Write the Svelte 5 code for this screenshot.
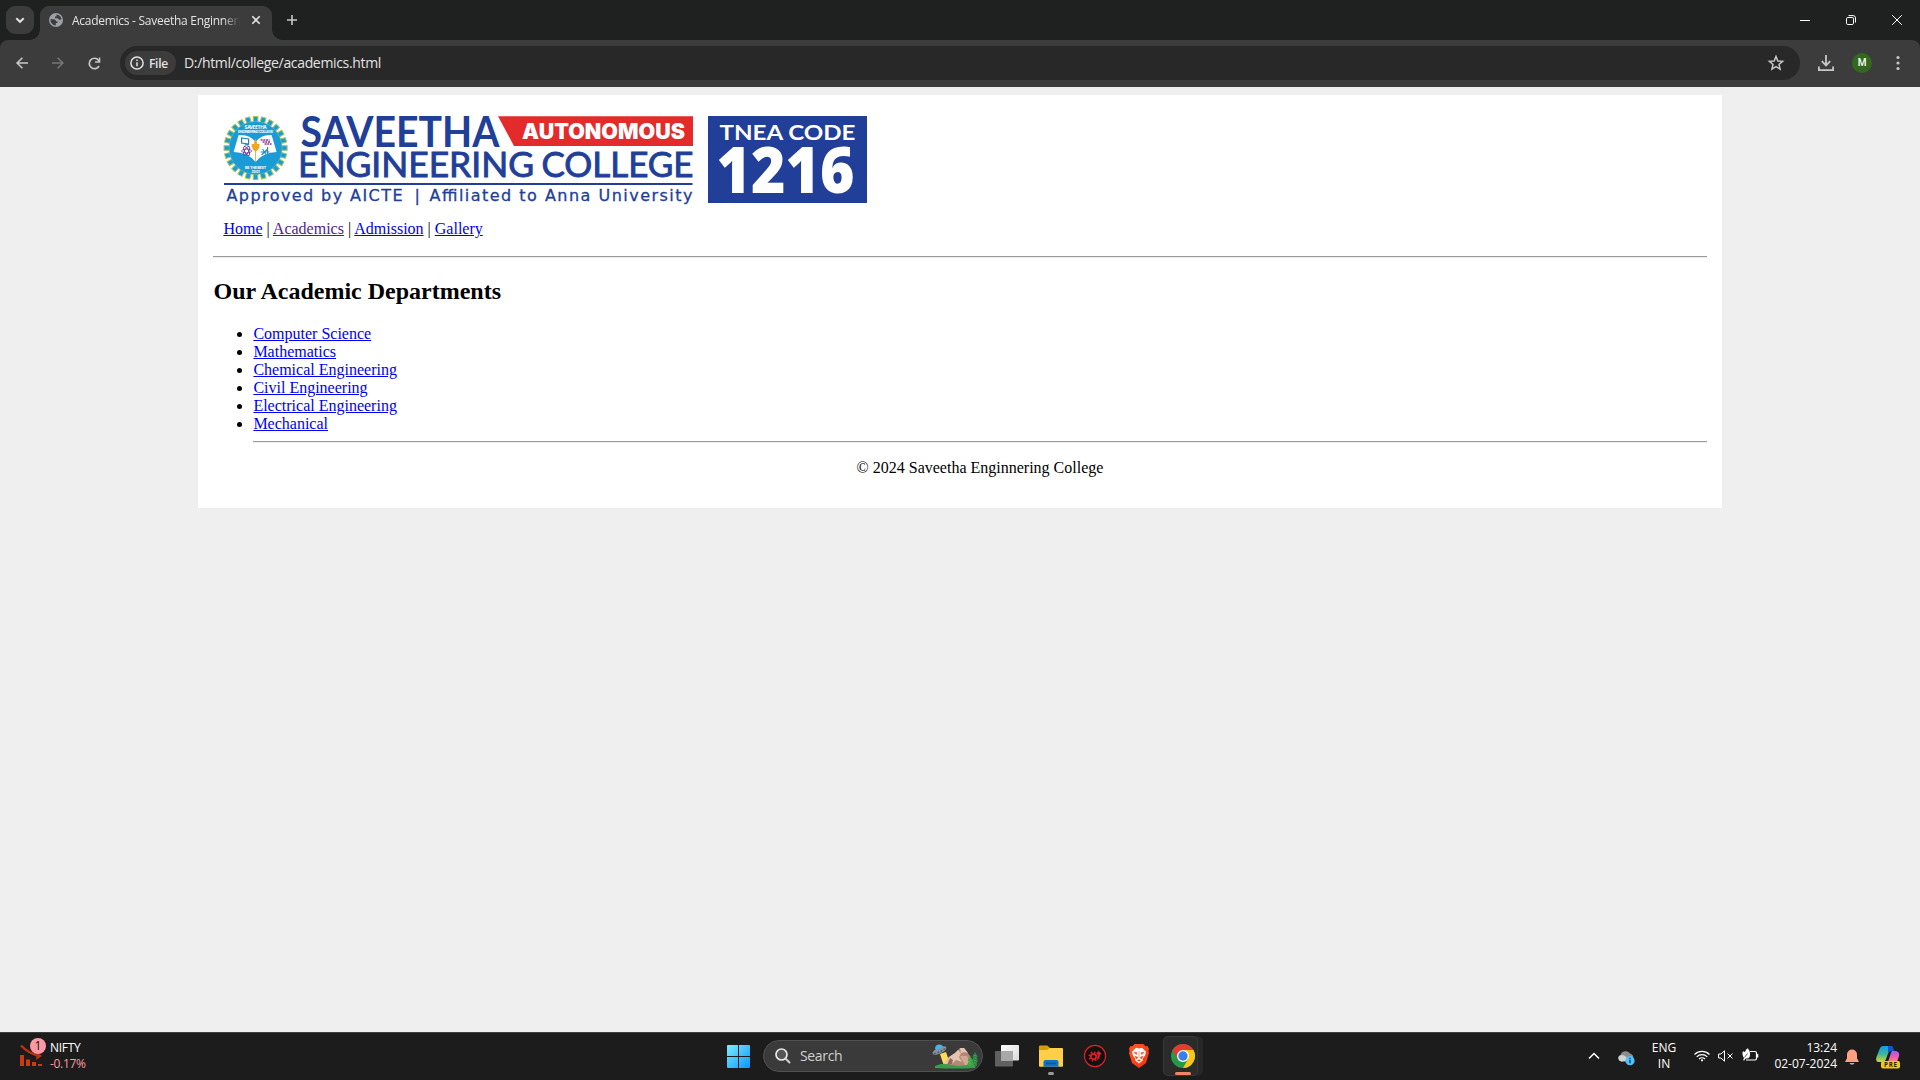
<script>
  const departments = [
    'Computer Science',
    'Mathematics',
    'Chemical Engineering',
    'Civil Engineering',
    'Electrical Engineering',
    'Mechanical'
  ];
  const teeth = Array.from({ length: 24 }, (_, i) => i * 15);
</script>

<div class="screen">
  <header class="tabstrip">
    <button class="tabsearch" aria-label="Search tabs">
      <svg width="28" height="28" viewBox="0 0 28 28"><path d="M10.3 12.2l3.7 3.6 3.7-3.6" fill="none" stroke="#e3e3e3" stroke-width="1.9" /></svg>
    </button>
    <div class="tab">
      <svg class="globe" width="14" height="14" viewBox="0 0 14 14">
        <circle cx="7" cy="7" r="7" fill="#9aa0a6" />
        <path d="M1.500 6.200h3.200c1.600 0 2.300 1 2.300 2.300h1.500v1.600H6.800v2.300C3.700 12.300 1.200 9.600 1.500 6.200zM7.500 1.500c2.500.2 4.500 2 5 4.600-.8 1-2 .9-2.800.2-.5-.5-.6-1-1.600-1H6V3.500h1.500z" fill="#3c3c3c" />
      </svg>
      <span class="title">Academics - Saveetha Enginnering College</span>
      <svg class="close" width="10" height="10" viewBox="0 0 10 10"><path d="M1.300 1.300l7.400 7.400M8.700 1.300L1.300 8.700" stroke="#e3e3e3" stroke-width="1.600" /></svg>
    </div>
    <svg class="plus" width="12" height="12" viewBox="0 0 12 12"><path d="M6 1v10M1 6h10" stroke="#c7c7c7" stroke-width="1.600" /></svg>
    <div class="controls">
      <svg width="10" height="10" viewBox="0 0 10 10"><path d="M0 5.500h10" stroke="#fff" /></svg>
      <svg width="10" height="10" viewBox="0 0 10 10" fill="none" stroke="#fff"><rect x=".5" y="2.500" width="7" height="7" rx="1.300" /><path d="M2.500.6h4.600a2.400 2.400 0 0 1 2.400 2.400v4.500" /></svg>
      <svg width="10" height="10" viewBox="0 0 10 10"><path d="M.2.2l9.600 9.600M9.800.2L.2 9.800" stroke="#fff" /></svg>
    </div>
  </header>

  <div class="toolbarwrap">
    <div class="toolbar">
      <svg class="nav" width="12" height="12" viewBox="0 0 12 12" fill="none" stroke="#c7c7c7" stroke-width="1.600"><path d="M12 6H1.200M6.400.7L1.100 6l5.300 5.300" /></svg>
      <svg class="nav fwd" width="12" height="12" viewBox="0 0 12 12" fill="none" stroke="#757575" stroke-width="1.600"><path d="M0 6h10.800M5.600.7L10.900 6l-5.300 5.300" /></svg>
      <svg class="nav reload" width="13" height="13" viewBox="0 0 13 13"><path d="M11 9A5.200 5.200 0 1 1 10.500 3.200L11.600 4.500" fill="none" stroke="#c7c7c7" stroke-width="1.700" /><path d="M12.300.5v5.200H7.100V4.200h3.700V.5z" fill="#c7c7c7" /></svg>
      <div class="omnibox">
        <span class="chip">
          <svg width="14" height="14" viewBox="0 0 14 14"><circle cx="7" cy="7" r="6.100" fill="none" stroke="#e3e3e3" stroke-width="1.500" /><path d="M7 6.200v4M7 3.500v1.500" stroke="#e3e3e3" stroke-width="1.500" /></svg>
          <b>File</b>
        </span>
        <span class="url">D:/html/college/academics.html</span>
        <svg class="star" width="16" height="16" viewBox="0 0 16 16"><path d="M8 1.500l1.850 4.450 4.750.4-3.600 3.100 1.100 4.700L8 11.650l-4.100 2.500L5 9.450l-3.600-3.100 4.750-.4z" fill="none" stroke="#c7c7c7" stroke-width="1.500" /></svg>
      </div>
      <svg class="download" width="16" height="16" viewBox="0 0 16 16" fill="none" stroke="#c7c7c7" stroke-width="1.800"><path d="M8 0v10M3.800 6.200L8 10.400l4.200-4.200M.9 11.500v3.600h14.200v-3.600" /></svg>
      <span class="avatar">M</span>
      <svg class="dots" width="4" height="16" viewBox="0 0 4 16" fill="#c7c7c7"><circle cx="2" cy="2.500" r="1.600" /><circle cx="2" cy="8" r="1.600" /><circle cx="2" cy="13.500" r="1.600" /></svg>
    </div>
  </div>

  <main>
    <div class="container">
      <svg class="banner" width="645" height="92" viewBox="223 116 645 92">
        <g transform="translate(255.600 148)">
          {#each teeth as a}
            <rect x="-2.300" y="-31.500" width="4.600" height="8" fill="#199bd7" stroke="#a9c65a" stroke-width="1" transform="rotate({a})" />
          {/each}
          <circle r="26.500" fill="#199bd7" stroke="#7dbf8d" stroke-width=".6" />
          <path d="M-17-13Q-6-14 0-6 6-14 16-13L21 4Q8 4 0 14-8 4-22 4z" fill="#fff" />
          <path d="M0-6v20" stroke="#d9b13b" stroke-width="1" />
          <path d="M0-9c2 3 1 4 1.500 5H4q0 5-3 7h-2q-3-2-3-7h2.500C-1-5-2-6 0-9z" fill="#f0a71f" />
          <path d="M-14-10l7 1v5l-7-1zM-11-3h4" fill="none" stroke="#2080ba" stroke-width="1.200" />
          <g fill="none" stroke="#704299" stroke-width=".9"><ellipse cx="-9" cy="3" rx="5" ry="2" /><ellipse cx="-9" cy="3" rx="5" ry="2" transform="rotate(60 -9 3)" /><ellipse cx="-9" cy="3" rx="5" ry="2" transform="rotate(-60 -9 3)" /></g>
          <path d="M5-8h9M7-6h8M9-4h7" stroke="#813a89" stroke-width="1.300" stroke-dasharray="2 .7" />
          <path d="M6 7l6-6M7 1l3 5M12-1v8M5 4h9" stroke="#2b8cba" stroke-width="1.100" />
          <g fill="#fff" font-family="Inter, sans-serif" font-weight="700" text-anchor="middle">
            <text y="-19.500" font-size="4.600" textLength="22">SAVEETHA</text>
            <text y="-15" font-size="3.500" textLength="35">ENGINEERING COLLEGE</text>
            <text y="21" font-size="3.700" textLength="21">BE THE BEST</text>
            <text y="24.700" font-size="3.500">2001</text>
          </g>
        </g>
        <g fill="#213e98" font-family="Lato, sans-serif">
          <text x="300.500" y="147" font-size="42" font-weight="700" textLength="199" lengthAdjust="spacingAndGlyphs">SAVEETHA</text>
          <text x="298" y="177.300" font-size="34.500" stroke="#213e98" stroke-width=".9" textLength="236" lengthAdjust="spacingAndGlyphs">ENGINEERING</text>
          <text x="541.500" y="177.300" font-size="34.500" stroke="#213e98" stroke-width=".9" textLength="152" lengthAdjust="spacingAndGlyphs">COLLEGE</text>
        </g>
        <path d="M498 116.300h195V146H514z" fill="#e32b2c" />
        <text x="522" y="139" fill="#fff" font-family="Inter, sans-serif" font-weight="900" font-size="21" textLength="163" lengthAdjust="spacingAndGlyphs">AUTONOMOUS</text>
        <path d="M224 184h468.500" stroke="#213e98" stroke-width="2.200" />
        <g fill="#213e98" stroke="#213e98" stroke-width=".3" font-family="DejaVu Sans, sans-serif" font-size="16">
          <text x="226.500" y="201" textLength="176">Approved by AICTE</text>
          <text x="414.500" y="201">|</text>
          <text x="429.500" y="201" textLength="263">Affiliated to Anna University</text>
        </g>
        <path d="M708 116h159v87H708z" fill="#213e98" />
        <text x="719.500" y="140" fill="#fff" font-family="Lato, sans-serif" font-weight="700" font-size="21.500" textLength="136" lengthAdjust="spacingAndGlyphs">TNEA CODE</text>
        <text x="716.500" y="193.300" fill="#fff" font-family="Open Sans, sans-serif" font-weight="800" font-size="63" textLength="138" lengthAdjust="spacingAndGlyphs">1216</text>
      </svg>

      <nav class="links"><a href="#home">Home</a> | <a class="visited" href="#academics">Academics</a> | <a href="#admission">Admission</a> | <a href="#gallery">Gallery</a></nav>
      <hr class="first" />
      <h2>Our Academic Departments</h2>
      <ul>
        {#each departments as d}
          <li><a href="#dept">{d}</a></li>
        {/each}
        <hr />
        <p>© 2024 Saveetha Enginnering College</p>
      </ul>
    </div>
  </main>

  <footer class="taskbar">
    <div class="widget">
      <svg width="30" height="32" viewBox="0 0 30 32">
        <path d="M0 15h4v11H0zM6 19.500h4V26H6zM12 22h4v4h-4zM18 24h4v2h-4z" fill="#cd3a0d" />
        <path d="M1 5.500Q8 13 19 16" fill="none" stroke="#b93310" stroke-width="2.400" />
        <path d="M17 12l5 4-6 4z" fill="#b93310" />
        <circle cx="18" cy="6" r="8" fill="#ff99a4" />
        <text x="18" y="10.300" text-anchor="middle" font-size="12" fill="#111">1</text>
      </svg>
      <div class="quote"><span>NIFTY</span><span class="down">-0.17%</span></div>
    </div>

    <div class="apps">
      <svg width="24" height="24" viewBox="0 0 24 24">
        <defs><linearGradient id="win" gradientUnits="userSpaceOnUse" x1="0" y1="0" x2="24" y2="24"><stop offset="0" stop-color="#7df0ff" /><stop offset=".5" stop-color="#42c1fa" /><stop offset="1" stop-color="#0795ff" /></linearGradient></defs>
        <path d="M1 1h10v11H0V2a1 1 0 0 1 1-1zM12 1h10a1 1 0 0 1 1 1v10H12zM0 13h11v11H1a1 1 0 0 1-1-1zM12 13h11v10a1 1 0 0 1-1 1H12z" fill="url(#win)" />
      </svg>
      <div class="search">
        <svg width="16" height="16" viewBox="0 0 16 16"><circle cx="6.500" cy="6.500" r="5.500" fill="#555" stroke="#e8e8e8" stroke-width="1.700" /><path d="M10.500 10.500l4 4" stroke="#d0d0d0" stroke-width="2" stroke-linecap="round" /></svg>
        <span>Search</span>
        <svg class="art" width="47" height="25" viewBox="0 0 47 25">
          <path d="M8 10l6-2 3 9-5 5z" fill="#ffdd5c" />
          <path d="M3 22q7-3 12-2 14-4 29 1l-1 3q-20 1-40 0z" fill="#35a04a" />
          <path d="M12 20l5-7 6-4 5-5h4l6 8 3 8-14 2z" fill="#b48875" />
          <path d="M12 20l5-7 6-4 3-3 3 3-2 4 3 5-6-2-4 4zM28 4h4l4 5-4-1-3 1z" fill="#e3c4b3" />
          <path d="M28 12l5 9h6l-4-9z" fill="#d2a894" /><path d="M18 14l3 2-1 4-5 1z" fill="#94695d" />
          <ellipse cx="7.500" cy="6.500" rx="7.500" ry="3" fill="#8792a0" transform="rotate(-25 7.500 6.500)" />
          <path d="M3 5q0-4 3.500-4.500Q10 0 11 2.500 7.500 6 3 5z" fill="#46b4e4" />
          <path d="M2 9.500q5-.5 11-5" fill="none" stroke="#515b67" stroke-width="1.400" stroke-dasharray="2 1.500" />
          <path d="M43 8l-3 5h1.500l-2.500 5h2v4h4v-4h1l-1-5h1z" fill="#2c8540" /><path d="M38 12l-2.500 5h1.500l-2.500 5h8l-2-5h1z" fill="#3ba44a" />
          <path d="M38 14v8M43 11v10" stroke="#8ac36b" stroke-width=".7" stroke-dasharray="1 1.500" />
        </svg>
      </div>
      <svg width="24" height="24" viewBox="0 0 24 24">
        <defs><linearGradient id="tv" x2="1" y2="1"><stop offset="0" stop-color="#fff" /><stop offset="1" stop-color="#d8d8d8" /></linearGradient></defs>
        <rect x="0" y="7" width="18" height="15.500" rx=".8" fill="#606060" /><rect x="6" y="1" width="18" height="15.500" rx=".8" fill="url(#tv)" /><path d="M6 7h12v9.500H6z" fill="#a8a8a8" />
      </svg>
      <div class="running">
        <svg width="24" height="24" viewBox="0 0 24 24">
          <path d="M0 2.500a1 1 0 0 1 1-1h7.500l2.500 2.500V7H0z" fill="#d89b08" /><path d="M0 6h8l3-2h12a1 1 0 0 1 1 1v17a.8.8 0 0 1-.8.800H.8A.8.8 0 0 1 0 22z" fill="#ffcf48" />
          <path d="M4.500 22.800V18a2 2 0 0 1 2-2h11a2 2 0 0 1 2 2v4.800z" fill="#0f73c5" /><path d="M7 19.500h10" stroke="#0a559b" stroke-width="1.500" />
        </svg>
        <i></i>
      </div>
      <svg width="24" height="24" viewBox="0 0 24 24">
        <circle cx="12" cy="12" r="10.600" fill="#111" stroke="#e02128" stroke-width="1.100" />
        <circle cx="10.500" cy="12.500" r="2.700" fill="none" stroke="#e02128" stroke-width="1.700" />
        <circle cx="10.500" cy="12.500" r="4.300" fill="none" stroke="#e02128" stroke-width="1.600" stroke-dasharray="1.600 1.780" />
        <path d="M13 9.500l2.500-2.700 3.700 3.300-1.900.3q0 4.500-3.600 6l.3-2.400 1-3.300z" fill="#e02128" stroke="#111" stroke-width=".4" />
      </svg>
      <svg width="24" height="24" viewBox="0 0 24 24">
        <defs><linearGradient id="brave" x2="1" y2="1"><stop offset="0" stop-color="#ff5a1f" /><stop offset="1" stop-color="#f52d12" /></linearGradient></defs>
        <path d="M7.500 0h9l2 2.200 2-.2L22 5l-.6 2L22 9l-3 10-7 5-7-5L2 9l.6-2L2 5l1.500-3 2 .2z" fill="url(#brave)" />
        <path d="M12 4.500l3-.8 4 4-1 4-2.500 3 .5 1.500-4 3.300-4-3.300.5-1.500-2.500-3-1-4 4-4z" fill="#fff" />
        <path d="M6.800 8.200l3.200.6-.6 1.800zM17.200 8.200l-3.200.6.6 1.800zM12 7v6M8 12l3 1.500L9.500 15zM16 12l-3 1.500 1.500 1.500z" fill="#f6401a" stroke="#f6401a" stroke-width=".5" />
        <path d="M10 16.300l2-.9 2 .9-2 1.500z" fill="#f6401a" />
      </svg>
      <div class="stack"><div class="tile">
        <svg width="24" height="24" viewBox="0 0 24 24">
          <circle cx="12" cy="12" r="12" fill="#279847" />
          <path d="M12 6h10.400A12 12 0 0 1 12 24l5.200-9z" fill="#fdc813" />
          <path d="M6.800 15L1.600 6A12 12 0 0 1 22.400 6H12z" fill="#e33b2e" />
          <circle cx="12" cy="12" r="6" fill="#fff" /><circle cx="12" cy="12" r="4.700" fill="#3b7ded" />
        </svg>
        <i></i>
      </div></div>
    </div>

    <div class="tray">
      <svg width="12" height="8" viewBox="0 0 12 8"><path d="M1 6.500l5-5 5 5" fill="none" stroke="#fff" stroke-width="1.500" /></svg>
      <svg class="cloud" width="17" height="16" viewBox="0 0 17 16">
        <path d="M3.500 11.500A3.200 3.200 0 0 1 2.500 5.300 5.300 5.300 0 0 1 12 3.500 4 4 0 0 1 15 9l-4 2.500z" fill="#8c8c8c" /><path d="M3.500 11.500A3.200 3.200 0 0 1 2.500 5.300q3-1 6 2l3 3.200z" fill="#d2d2d2" />
        <circle cx="12" cy="10.700" r="4.600" fill="#4cc2ff" /><path d="M12 9.800v3.400M12 7.700v1.200" stroke="#17384c" stroke-width="1.300" />
      </svg>
      <div class="lang"><span>ENG</span><span>IN</span></div>
      <svg class="wifi" width="16" height="12" viewBox="0 0 16 12" fill="none" stroke="#fff" stroke-width="1.200"><path d="M.5 4.500a10.600 10.600 0 0 1 15 0M2.700 6.800a7.500 7.500 0 0 1 10.600 0M5 9a4.300 4.300 0 0 1 6 0" /><circle cx="8" cy="10.300" r="1.100" fill="#fff" stroke="none" /></svg>
      <svg class="volume" width="16" height="12" viewBox="0 0 16 12" fill="none" stroke="#fff"><path d="M.6 4h2.300L6.500.8v10.400L2.900 8H.6zM9.500 3.500l5 5M14.500 3.500l-5 5" /></svg>
      <svg class="battery" width="17" height="14" viewBox="0 0 17 14"><path d="M8 3.500h5a1.500 1.500 0 0 1 1.500 1.500v5.500A1.500 1.500 0 0 1 13 12H4" fill="none" stroke="#fff" stroke-width="1.200" /><path d="M15 6h1.300v3.500H15z" fill="#fff" /><path d="M5.800.2Q9 4 7.800 8.400 6.500 11 3.500 10.500L2 12.700l-.8-.6L2 10Q-.5 6 1 3.200L3 4Q4 1 5.800.2z" fill="#fff" /><path d="M2.500 9.500l3-4" stroke="#1c1c1c" stroke-width=".7" /></svg>
      <div class="clock"><span>13:24</span><span>02-07-2024</span></div>
      <svg class="bell" width="14" height="16" viewBox="0 0 14 16"><path d="M7 .5a5 5 0 0 1 5 5v3.700l1.700 3v.8H.3v-.8l1.700-3V5.500a5 5 0 0 1 5-5zM4.500 14h5q-.8 1.700-2.500 1.700T4.500 14z" fill="#ffa080" /></svg>
      <svg class="copilot" width="25" height="24" viewBox="0 0 25 24">
        <defs>
          <linearGradient id="cpa" x2="0" y2="1"><stop offset="0" stop-color="#129be8" /><stop offset=".5" stop-color="#3cb69b" /><stop offset="1" stop-color="#dbd532" /></linearGradient>
          <linearGradient id="cpb" x2="0" y2="1"><stop offset="0" stop-color="#a45cf0" /><stop offset=".5" stop-color="#e75ab5" /><stop offset="1" stop-color="#fb8b65" /></linearGradient>
        </defs>
        <path d="M7 1h8q2 0 1 3l-3 2-3 8q-1 3-4 3H3q-4 0-2.500-5L4 3q1-2 3-2z" fill="url(#cpa)" />
        <path d="M12 1h3q2 0 2.500 3l.8 2H15q-2 0-3 3z" fill="#1455c9" />
        <path d="M16 6h4q4 1 3 5l-2 6h-9l3-9q.5-1.600 1-2z" fill="url(#cpb)" />
        <rect x="5" y="16" width="19" height="7.500" rx="2" fill="#fbc70b" />
        <text x="14.500" y="22.100" text-anchor="middle" font-size="6.200" font-weight="700" fill="#222" textLength="13">PRE</text>
      </svg>
    </div>
  </footer>
</div>

<style>
  :global(body) { margin: 0; overflow: hidden; }
  .screen { width: 1920px; height: 1080px; display: flex; flex-direction: column; background: #efefef; font-family: 'Open Sans', 'Noto Sans', sans-serif; }
  svg { display: block; flex: none; overflow: visible; }
  .tabstrip { height: 40px; display: flex; background: #1f2120; flex: none; }
  .tabsearch { width: 28px; height: 28px; margin: 6px 6px 0; padding: 0; border: 0; border-radius: 9px; background: #3c3c3c; flex: none; }
  .tab { position: relative; width: 232px; height: 34px; margin-top: 6px; padding: 0 11px 6px 9px; box-sizing: border-box; display: flex; align-items: center; background: #3c3c3c; border-radius: 9px 9px 0 0; }
  .tab::before, .tab::after { content: ''; position: absolute; bottom: 0; width: 10px; height: 10px; }
  .tab::before { left: -10px; background: radial-gradient(circle at 0 0, transparent 9.500px, #3c3c3c 10px); }
  .tab::after { right: -10px; background: radial-gradient(circle at 100% 0, transparent 9.500px, #3c3c3c 10px); }
  .title { width: 168px; margin-left: 9px; overflow: hidden; white-space: nowrap; font-size: 12px; letter-spacing: -0.27px; line-height: 18px; margin-top: 1px; color: #e3e3e3; mask-image: linear-gradient(90deg, #000 90%, transparent 100%); }
  .close { margin-left: 11px; }
  .plus { margin: 14px 0 0 14px; }
  .controls { margin: 15px 18px 0 auto; display: flex; gap: 36px; }
  .toolbarwrap { background: #1f2120; flex: none; }
  .toolbar { height: 47px; display: flex; align-items: center; padding: 0 20px 1px 16px; box-sizing: border-box; background: #3c3c3c; border-radius: 8px 8px 0 0; }
  .fwd { margin-left: 24px; }
  .reload { margin-left: 24px; }
  .omnibox { width: 1680px; height: 34px; margin-left: 19px; padding: 0 16px 0 5px; box-sizing: border-box; display: flex; align-items: center; border-radius: 17px; background: #282828; flex: none; }
  .chip { width: 51px; height: 24px; padding-left: 5px; box-sizing: border-box; display: flex; align-items: center; gap: 5px; border-radius: 12px; background: #3c3c3c; color: #e3e3e3; }
  .chip b { font-size: 12px; font-weight: 600; letter-spacing: -0.3px; }
  .url { margin: -1px 0 0 8px; font-size: 14px; letter-spacing: -0.34px; color: #e3e3e3; }
  .star { margin-left: auto; }
  .download { margin-left: 18px; }
  .avatar { width: 20px; height: 20px; margin-left: 18px; border-radius: 50%; background: #33691e; color: #fff; font: 500 10px/20px Roboto, sans-serif; text-align: center; }
  .dots { margin-left: 24px; }

  main { flex: 1; padding-top: 8px; font: 16px/18px 'Liberation Serif', serif; color: #000; }
  .container { width: 1524px; height: 413px; margin: 0 auto; padding: 21px 15px 0; box-sizing: border-box; background: #fff; }
  .banner { margin-left: 10px; }
  .links { margin: 12px 0 0 10.400px; height: 18px; }
  a { color: #0000ee; text-decoration: underline; }
  .visited { color: #551a8b; }
  hr { height: 0; margin: 8px 0; border: 0; border-top: 1px solid #9a9a9a; border-bottom: 1px solid #eee; }
  .first { margin: 18px 0 0; }
  h2 { margin: 20px 0 20px 0.500px; font-size: 24px; line-height: 27px; font-weight: 700; }
  ul { margin: 0; padding-left: 40px; }
  li a { margin-left: 0.400px; }
  p { margin: 16px 0; text-align: center; }

  .taskbar { height: 48px; border-top: 1px solid #3d3d3d; box-sizing: border-box; display: grid; grid-template-columns: 727px 1fr 336px; background: #1c1c1c; color: #fff; flex: none; font-size: 12px; line-height: 16px; }
  .widget { display: flex; padding: 7px 0 0 20px; }
  .quote { display: flex; flex-direction: column; letter-spacing: -0.3px; }
  .down { color: #ff99a4; }
  .apps { display: flex; align-items: center; gap: 20px; padding-bottom: 1px; }
  .search { width: 220px; height: 32px; margin: 0 -8px; padding: 0 3px 0 11px; box-sizing: border-box; display: flex; align-items: center; border: 1px solid #505050; border-radius: 16px; background: #3a3a3a; flex: none; }
  .search span { margin-left: 9px; font-size: 14px; letter-spacing: -0.35px; color: #cfcfcf; }
  .art { margin-left: auto; }
  .running { position: relative; }
  i { position: absolute; left: 9px; bottom: -7px; width: 6px; height: 3px; border-radius: 2px; background: #9a9a9a; }
  .stack { width: 40px; height: 40px; margin-left: -8px; border-radius: 5px; background: #272727; flex: none; }
  .tile { position: relative; width: 35px; height: 40px; box-sizing: border-box; border: 1px solid #383838; border-radius: 5px; background: #2b2b2b; display: flex; align-items: center; padding-left: 7px; }
  .tile i { left: 11px; bottom: 0; width: 16px; background: #f5836a; }
  .tray { display: flex; align-items: center; padding-left: 4px; padding-bottom: 1px; }
  .cloud { margin: 3px 0 0 18px; }
  .lang { width: 32px; margin-left: 13px; text-align: center; display: flex; flex-direction: column; }
  .wifi { margin-left: 14px; }
  .volume { margin-left: 8px; }
  .battery { margin: -2px 0 0 8px; }
  .clock { width: 70px; margin-left: 8px; text-align: right; display: flex; flex-direction: column; white-space: nowrap; align-items: flex-end; }
  .bell { margin: 2px 0 0 8px; }
  .copilot { margin: 2px 0 0 17px; }
</style>
